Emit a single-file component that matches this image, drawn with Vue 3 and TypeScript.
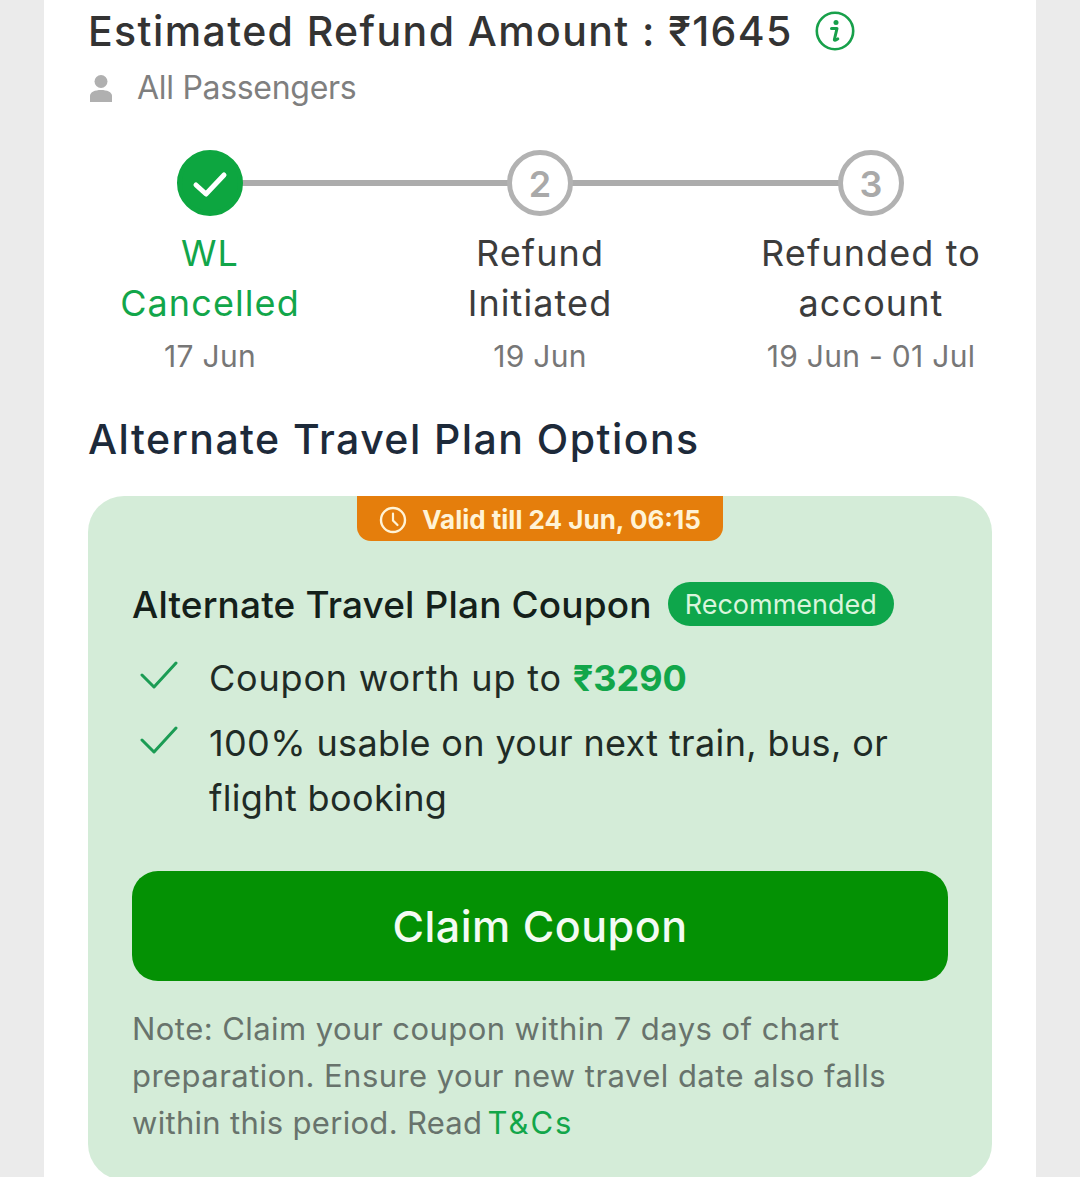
<script setup lang="ts">
interface Step {
  label: string[]
  date: string
  num?: number
  done?: boolean
}

const steps: Step[] = [
  { label: ['WL', 'Cancelled'], date: '17 Jun', done: true },
  { label: ['Refund', 'Initiated'], date: '19 Jun', num: 2 },
  { label: ['Refunded to', 'account'], date: '19 Jun - 01 Jul', num: 3 },
]
</script>

<template>
  <div class="page">
    <div class="card">
      <div class="title-row">
        <h1 class="title">Estimated Refund Amount : ₹1645</h1>
        <svg class="info" viewBox="0 0 40 40" width="40" height="40">
          <circle cx="20" cy="20" r="18.2" fill="none" stroke="#17a04a" stroke-width="2.6" />
          <circle cx="21" cy="11.5" r="2.5" fill="#17a04a" />
          <path d="M16.5 17.5h5.5l-2.6 11c-.2 1 .8 1.3 3.4-.6" fill="none" stroke="#17a04a" stroke-width="3" stroke-linejoin="round" stroke-linecap="round" />
        </svg>
      </div>
      <div class="pax">
        <svg viewBox="0 0 24 30" width="24" height="30">
          <circle cx="12" cy="9.500" r="6.500" fill="#b0b0b0" />
          <path d="M1 30v-6c0-4 5-6 11-6s11 2 11 6v6z" fill="#b0b0b0" />
        </svg>
        <span>All Passengers</span>
      </div>

      <div class="steps">
        <div v-for="(s, i) in steps" :key="i" class="step" :class="{ done: s.done }">
          <div class="marker">
            <div v-if="i < steps.length - 1" class="line"></div>
            <div class="dot">
              <svg v-if="s.done" viewBox="0 0 36 30" width="36" height="30">
                <path d="M4 16l10 9L32 6" fill="none" stroke="#fff" stroke-width="5" stroke-linecap="round" stroke-linejoin="round" />
              </svg>
              <span v-else>{{ s.num }}</span>
            </div>
          </div>
          <div class="label">
            <div v-for="l in s.label" :key="l">{{ l }}</div>
          </div>
          <div class="date">{{ s.date }}</div>
        </div>
      </div>

      <h2 class="heading">Alternate Travel Plan Options</h2>

      <div class="panel">
        <div class="valid">
          <svg viewBox="0 0 28 28" width="28" height="28">
            <circle cx="14" cy="14" r="12" fill="none" stroke="#fff3d6" stroke-width="2.400" />
            <path d="M14 7.500v7l4.500 4.500" fill="none" stroke="#fff3d6" stroke-width="2.200" stroke-linecap="round" />
          </svg>
          <span>Valid till 24 Jun, 06:15</span>
        </div>
        <div class="coupon-head">
          <span class="coupon-title">Alternate Travel Plan Coupon</span>
          <span class="badge">Recommended</span>
        </div>
        <div class="point first">
          <svg class="tick" viewBox="0 0 38 30" width="38" height="30">
            <path d="M2 15l12 12L36 3" fill="none" stroke="#1b9c54" stroke-width="3" stroke-linecap="round" stroke-linejoin="round" />
          </svg>
          <p>Coupon worth up to <b>₹3290</b></p>
        </div>
        <div class="point">
          <svg class="tick" viewBox="0 0 38 30" width="38" height="30">
            <path d="M2 15l12 12L36 3" fill="none" stroke="#1b9c54" stroke-width="3" stroke-linecap="round" stroke-linejoin="round" />
          </svg>
          <p>100% usable on your next train, bus, or flight booking</p>
        </div>
        <button class="claim">Claim Coupon</button>
        <p class="note">
          Note: Claim your coupon within 7 days of chart preparation. Ensure your new travel date also falls
          <span class="tight">within this period. Read</span> <span class="tc">T&amp;Cs</span>
        </p>
      </div>
    </div>
  </div>
</template>

<style>
html,
body {
  margin: 0;
  height: 100%;
  overflow: hidden;
  background: #ebebeb;
}
</style>

<style scoped>
.page {
  height: 1177px;
  overflow: hidden;
  background: #ebebeb;
  padding: 0 44px;
  box-sizing: border-box;
  font-family: Inter, 'Noto Sans', sans-serif;
}

.card {
  background: #fff;
  padding: 0 44px;
  height: 1260px;
}

.title-row {
  display: flex;
  align-items: center;
  gap: 22px;
  height: 62px;
}

.title {
  margin: 0;
  font-size: 41px;
  font-weight: 500;
  color: #333;
  line-height: 62px;
  letter-spacing: 1.4px;
}

.info {
  flex: none;
}

.pax {
  display: flex;
  align-items: center;
  gap: 24px;
  height: 50px;
  font-size: 32px;
  letter-spacing: -0.3px;
  color: #7f7f7f;
}

.pax svg {
  margin-left: 1px;
}

.steps {
  display: grid;
  grid-template-columns: 334px 326px 336px;
  margin: 38px 0 0 -45px;
  text-align: center;
}

.step {
  display: flex;
  flex-direction: column;
  align-items: center;
}

.marker {
  position: relative;
  width: 100%;
  height: 66px;
  display: flex;
  justify-content: center;
}

.line {
  position: absolute;
  left: 50%;
  top: 30px;
  width: 100%;
  height: 6px;
  background: #acacac;
}

.dot {
  position: relative;
  width: 66px;
  height: 66px;
  box-sizing: border-box;
  border-radius: 50%;
  border: 5px solid #b2b2b2;
  background: #fff;
  display: flex;
  align-items: center;
  justify-content: center;
  color: #a9a9a9;
  font-size: 36px;
  font-weight: 600;
  padding-top: 1px;
}

.done .dot {
  background: #0da640;
  border-color: #0da640;
}

.label {
  margin-top: 12px;
  font-size: 36px;
  line-height: 50px;
  letter-spacing: 1.1px;
  color: #3c3c3c;
}

.done .label {
  color: #12a64a;
}

.date {
  margin-top: 3px;
  font-size: 30px;
  line-height: 50px;
  letter-spacing: 0.3px;
  color: #777;
}

.heading {
  margin: 30px 0 0;
  font-size: 41px;
  font-weight: 500;
  line-height: 56px;
  letter-spacing: 1.45px;
  color: #1d2a3a;
}

.panel {
  position: relative;
  margin: 29px 0 0;
  padding: 86px 44px 0;
  background: #d4ecd8;
  border-radius: 36px;
  height: 684px;
  box-sizing: border-box;
}

.valid {
  position: absolute;
  top: 0;
  left: 269px;
  width: 366px;
  height: 45px;
  box-sizing: border-box;
  padding-top: 2px;
  background: #e57e0c;
  border-radius: 0 0 14px 14px;
  display: flex;
  align-items: center;
  justify-content: center;
  gap: 15px;
  color: #fff3d6;
  font-size: 26px;
  font-weight: 700;
}

.coupon-head {
  display: flex;
  align-items: center;
  gap: 16px;
  height: 44px;
}

.coupon-title {
  font-size: 37px;
  font-weight: 500;
  letter-spacing: 0.15px;
  color: #14201a;
}

.badge {
  background: #0ea64b;
  color: #d9f5dc;
  border-radius: 22px;
  height: 44px;
  line-height: 46px;
  padding: 0 17px;
  font-size: 27px;
}

.point {
  display: flex;
  gap: 31px;
  margin-left: 8px;
  margin-top: 10px;
}

.point.first {
  margin-top: 25px;
}

.tick {
  flex: none;
  margin-top: 9px;
}

.point p {
  margin: 0;
  font-size: 36px;
  line-height: 55px;
  letter-spacing: 0.37px;
  color: #1f2b26;
}

.point.first p {
  letter-spacing: 0.8px;
}

.point b {
  color: #12a64a;
  font-weight: 700;
  letter-spacing: 0;
}

.claim {
  display: block;
  width: 100%;
  height: 110px;
  margin-top: 45px;
  border: 0;
  border-radius: 26px;
  background: #049104;
  color: #f3fbf3;
  font-family: inherit;
  font-size: 43px;
  font-weight: 500;
  letter-spacing: 0.5px;
}

.note {
  margin: 24px 0 0;
  font-size: 31px;
  line-height: 47px;
  letter-spacing: 0.45px;
  color: #68736c;
}

.tight {
  letter-spacing: 0.3px;
}

.tc {
  color: #12a64a;
  margin-left: -4px;
  letter-spacing: 2px;
}
</style>
